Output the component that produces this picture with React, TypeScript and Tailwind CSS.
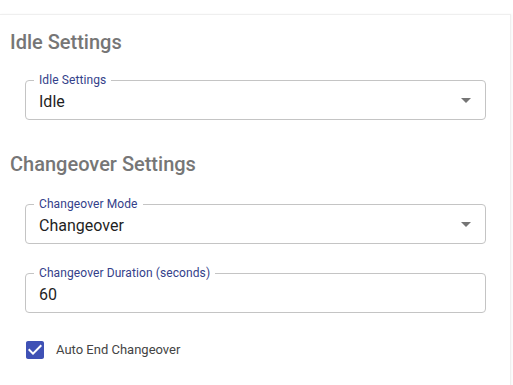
import React from 'react';

const ArrowDrop = () => (
  <svg viewBox="0 0 24 24" className="absolute right-[7px] top-[7px] h-6 w-6 fill-[#757575]">
    <path d="M7 10l5 5 5-5z" />
  </svg>
);

const OutlinedField: React.FC<{ label: string; value: string; select?: boolean }> = ({ label, value, select }) => (
  <div className="relative ml-[15px] mr-[14px] flex h-10 items-center rounded-[4px] border border-[#c4c4c4] pl-[13px]">
    <span className="absolute left-[8px] top-[-9px] bg-white px-[5px] text-[12px] leading-4 tracking-[0.1px] text-[#34418a]">{label}</span>
    <span className="relative top-[2px] text-[16px] leading-6 text-[#1f1f1f]">{value}</span>
    {select && <ArrowDrop />}
  </div>
);

export default function App() {
  return (
    <div className="h-[385px] w-[513px] overflow-hidden bg-white pt-[14px] font-['Roboto',sans-serif]">
      <div className="h-[400px] w-[511px] border-r border-t border-[#efefef] px-[10px] shadow-[1px_0_2px_rgba(0,0,0,0.04)]">
        <h2 className="mt-[15px] text-[20px] leading-6 font-medium text-[#767676]">Idle Settings</h2>
        <div className="mt-[26px]">
          <OutlinedField label="Idle Settings" value="Idle" select />
        </div>

        <h2 className="mt-[32px] text-[20px] leading-6 font-medium text-[#767676]">Changeover Settings</h2>
        <div className="mt-[28px]">
          <OutlinedField label="Changeover Mode" value="Changeover" select />
        </div>
        <div className="mt-[29px]">
          <OutlinedField label="Changeover Duration (seconds)" value="60" />
        </div>

        <label className="ml-[13px] mt-[25px] flex items-center gap-[9px]">
          <svg viewBox="0 0 24 24" className="h-6 w-6 fill-[#3f51b5]">
            <path d="M19 3H5c-1.11 0-2 .9-2 2v14c0 1.1.89 2 2 2h14c1.11 0 2-.9 2-2V5c0-1.1-.89-2-2-2zm-9 14l-5-5 1.41-1.41L10 14.17l7.59-7.59L19 8l-9 9z" />
          </svg>
          <span className="text-[13px] leading-5 text-[#444]">Auto End Changeover</span>
        </label>
      </div>
    </div>
  );
}
